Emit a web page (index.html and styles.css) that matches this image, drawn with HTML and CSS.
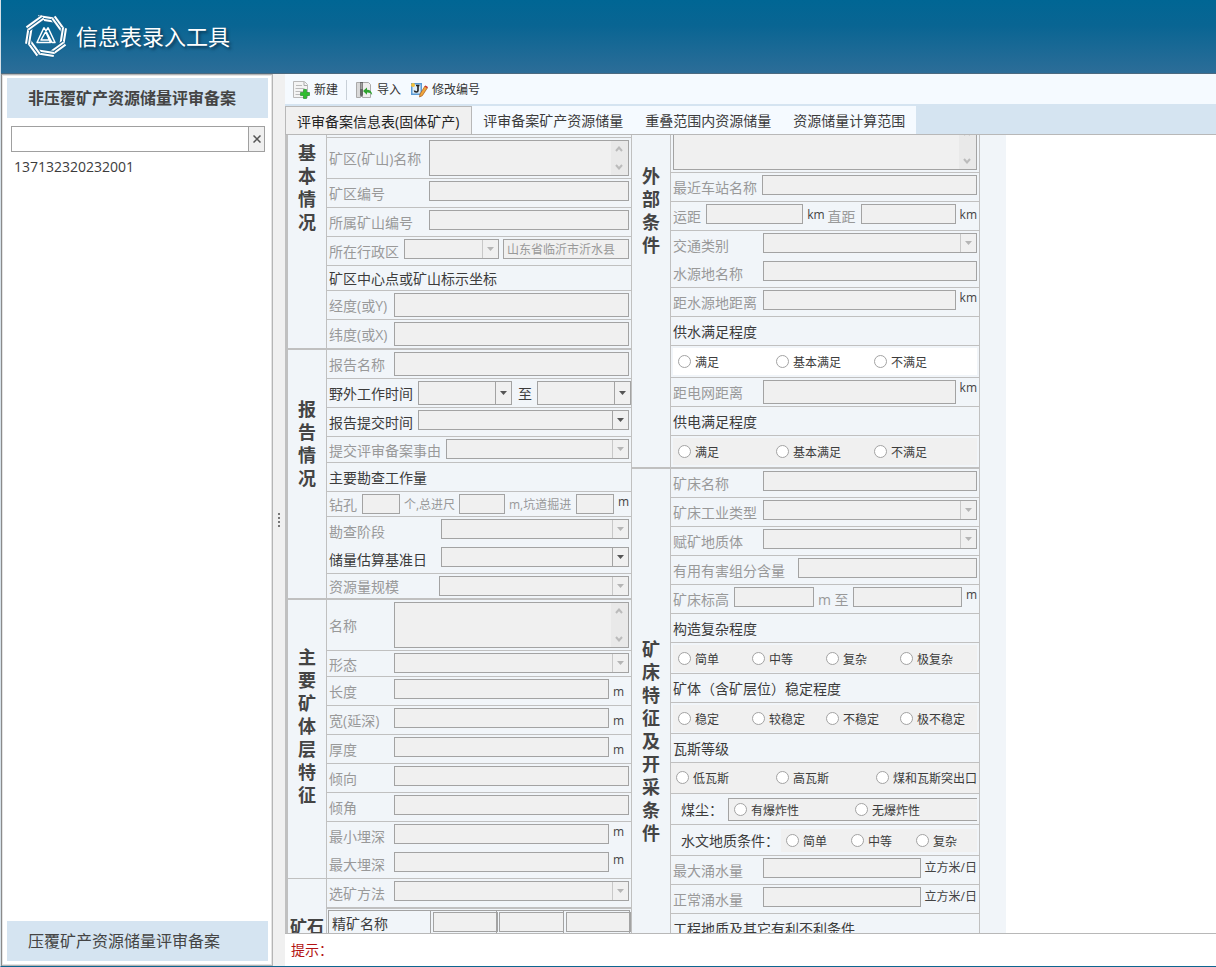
FILE: index.html
```html
<!DOCTYPE html>
<html lang="zh-CN">
<head>
<meta charset="utf-8">
<title>信息表录入工具</title>
<link rel="stylesheet" href="styles.css">
</head>
<body>
<div class="app">
  <header class="header">
    <svg class="logo" viewBox="-22 -22 44 44" aria-hidden="true">
      <defs>
        <g id="strip" fill="none">
          <path d="M-8 -18.500L10 -15.500" stroke="#17628c" stroke-width="7"/>
          <path d="M-8 -18.500L11 -15.500" stroke="#fff" stroke-width="5"/>
          <path d="M-8 -18.500L11 -15.500" stroke="#17628c" stroke-width="1"/>
        </g>
      </defs>
      <use href="#strip"/><use href="#strip" transform="rotate(45)"/><use href="#strip" transform="rotate(90)"/><use href="#strip" transform="rotate(135)"/>
      <use href="#strip" transform="rotate(180)"/><use href="#strip" transform="rotate(225)"/><use href="#strip" transform="rotate(270)"/><use href="#strip" transform="rotate(315)"/>
      <g fill="none" stroke="#fff" stroke-width="1.500" stroke-linejoin="round">
        <path d="M-2 -8.500L-9 6.500H4.500L0 -3.500M2 -8.500L9 6.500H6L-2 -8.500M2 -8.500L-5 4H3"/>
      </g>
    </svg>
    <h1 class="title">信息表录入工具</h1>
  </header>

  <div class="body">
    <aside class="sidebar">
      <button class="nav nav-active" type="button">非压覆矿产资源储量评审备案</button>
      <div class="search">
        <input class="search-input" type="text" aria-label="搜索">
        <button class="search-clear" type="button" aria-label="清除"><svg viewBox="0 0 8 8"><path d="M0.500 0.500 7.500 7.500M7.500 0.500 0.500 7.500" stroke="#555" stroke-width="1.500"/></svg></button>
      </div>
      <ul class="list"><li>137132320232001</li></ul>
      <button class="nav" type="button">压覆矿产资源储量评审备案</button>
    </aside>
    <div class="splitter"><i></i><i></i><i></i><i></i></div>

    <main class="main">
      <div class="toolbar">
        <button class="tool" type="button">
          <svg viewBox="0 0 18 18"><path d="M1.500 0.500h11l3 3v13h-14z" fill="#f4f4f4" stroke="#b9b9b9"/><path d="M12 1v3.500h3" fill="none" stroke="#aaa"/><path d="M4 4.500h6M3.500 7.500h9M3.500 10.500h8M3.500 13.500h5" stroke="#bbb"/><path d="M11.500 8.500h3v3h3v3h-3v3h-3v-3h-3v-3h3z" fill="#2fbe2f" stroke="#14871b" stroke-width=".6"/></svg>新建</button>
        <span class="tool-sep"></span>
        <button class="tool" type="button">
          <svg viewBox="0 0 18 18"><path d="M1.500 1.500h4v15h-4z" fill="#d9d9d9" stroke="#aaa"/><path d="M7.500 1.500h6l2 2v13h-8z" fill="#eee" stroke="#aaa"/><path d="M5 1h3v13l-1.500 2-1.500-2z" fill="#666"/><path d="M5.500 3h2M5.500 5h2M5.500 7h2" stroke="#ddd"/><path d="M8 10l4-3.500v2.300c3 0 5 1.700 5.200 5.200-1.200-2-2.800-2.700-5.200-2.600v2.300z" fill="#2fa32f"/></svg>导入</button>
        <button class="tool" type="button">
          <svg viewBox="0 0 18 18"><path d="M1 2h11v12H1z" fill="#5b9bd5"/><path d="M2.500 3.500h8v9h-8z" fill="#dcecf8"/><circle cx="3" cy="4" r="2" fill="#f3c13a"/><path d="M8 4v5.500c0 2-3.500 2-3.500 0M6 4.500h3.500" fill="none" stroke="#222" stroke-width="1.600"/><path d="M10 13l5-8 2.500 1.700-5.200 8L9.500 16z" fill="#f0a63c" stroke="#a65a1b" stroke-width=".7"/><path d="M15 5l2.500 1.700" stroke="#c33" stroke-width="1.500"/></svg>修改编号</button>
      </div>
      <div class="tabs" role="tablist">
        <button class="tab tab-active" role="tab" type="button">评审备案信息表(固体矿产)</button>
        <button class="tab" role="tab" type="button">评审备案矿产资源储量</button>
        <button class="tab" role="tab" type="button">重叠范围内资源储量</button>
        <button class="tab" role="tab" type="button">资源储量计算范围</button>
      </div>

      <div class="viewport">
        <form class="sheet">
          <div class="column">
            <section class="section">
              <h2 class="side side-1">基本情况</h2>
              <div class="rows rows-end">
                <div class="row row-cut"></div>
                <div class="row row-41"><label class="w100" for="f1">矿区(矿山)名称</label><textarea id="f1" disabled></textarea></div>
                <div class="row"><label class="w100" for="f2">矿区编号</label><input class="grow" id="f2" type="text" disabled></div>
                <div class="row"><label class="w100" for="f3">所属矿山编号</label><input class="grow" id="f3" type="text" disabled></div>
                <div class="row"><label class="w75" for="f4">所在行政区</label><select class="i95" id="f4" disabled></select><input class="grow gap-l" type="text" aria-label="行政区名称" value="山东省临沂市沂水县" disabled></div>
                <div class="row row-25"><span class="label dark">矿区中心点或矿山标示坐标</span></div>
                <div class="row"><label class="w65" for="f5">经度(或Y)</label><input class="grow tall" id="f5" type="text" disabled></div>
                <div class="row"><label class="w65" for="f6">纬度(或X)</label><input class="grow tall" id="f6" type="text" disabled></div>
              </div>
            </section>
            <section class="section">
              <h2 class="side side-2">报告情况</h2>
              <div class="rows rows-end">
                <div class="row"><label class="w65" for="g1">报告名称</label><input class="grow tall" id="g1" type="text" disabled></div>
                <div class="row row-flush"><label class="w89 dark" for="g2">野外工作时间</label><select class="grow tall" id="g2"></select><label class="between dark" for="g3">至</label><select class="grow tall" id="g3"></select></div>
                <div class="row"><label class="w89 dark" for="g4">报告提交时间</label><select class="grow" id="g4"></select></div>
                <div class="row row-26"><label class="w117" for="g5">提交评审备案事由</label><select class="grow" id="g5" disabled></select></div>
                <div class="row"><span class="label dark">主要勘查工作量</span></div>
                <div class="row row-25"><label class="w33" for="g6">钻孔</label><input class="i38" id="g6" type="text" disabled><label class="small w59" for="g7">个,总进尺</label><input class="i46" id="g7" type="text" disabled><label class="small grow" for="g8">m,坑道掘进</label><input class="i38" id="g8" type="text" disabled><span class="unit">m</span></div>
                <div class="row row-open"><label class="w112" for="g9">勘查阶段</label><select class="grow" id="g9" disabled></select></div>
                <div class="row"><label class="w112 dark" for="g10">储量估算基准日</label><select class="grow" id="g10"></select></div>
                <div class="row row-25"><label class="w110" for="g11">资源量规模</label><select class="grow" id="g11" disabled></select></div>
              </div>
            </section>
            <section class="section">
              <h2 class="side side-3">主要矿体层特征</h2>
              <div class="rows">
                <div class="row row-51"><label class="w65" for="h1">名称</label><textarea id="h1" disabled></textarea></div>
                <div class="row row-26"><label class="w65" for="h2">形态</label><select class="grow" id="h2" disabled></select></div>
                <div class="row"><label class="w65" for="h3">长度</label><input class="grow" id="h3" type="text" disabled><span class="unit unit-m low">m</span></div>
                <div class="row"><label class="w65" for="h4">宽(延深)</label><input class="grow" id="h4" type="text" disabled><span class="unit unit-m low">m</span></div>
                <div class="row"><label class="w65" for="h5">厚度</label><input class="grow" id="h5" type="text" disabled><span class="unit unit-m low">m</span></div>
                <div class="row"><label class="w65" for="h6">倾向</label><input class="grow" id="h6" type="text" disabled></div>
                <div class="row"><label class="w65" for="h7">倾角</label><input class="grow" id="h7" type="text" disabled></div>
                <div class="row row-open"><label class="w65" for="h8">最小埋深</label><input class="grow" id="h8" type="text" disabled><span class="unit unit-m">m</span></div>
                <div class="row"><label class="w65" for="h9">最大埋深</label><input class="grow" id="h9" type="text" disabled><span class="unit unit-m">m</span></div>
              </div>
            </section>
            <section class="section">
              <h2 class="side side-4">矿石</h2>
              <div class="rows">
                <div class="row row-thick"><label class="w65" for="k1">选矿方法</label><select class="grow" id="k1" disabled></select></div>
                <table class="ore">
                  <tr><th>精矿名称</th><td><input type="text" aria-label="精矿名称一" disabled></td><td><input type="text" aria-label="精矿名称二" disabled></td><td><input type="text" aria-label="精矿名称三" disabled></td></tr>
                </table>
              </div>
            </section>
          </div>

          <div class="column">
            <section class="section">
              <h2 class="side side-5">外部条件</h2>
              <div class="rows rows-end">
                <div class="row row-38"><textarea class="scrolled" aria-label="交通位置" disabled></textarea></div>
                <div class="row"><label class="w89" for="m1">最近车站名称</label><input class="grow" id="m1" type="text" disabled></div>
                <div class="row"><label class="w33" for="m2">运距</label><input class="grow" id="m2" type="text" disabled><span class="unit low">km</span><label class="near" for="m3">直距</label><input class="i95" id="m3" type="text" disabled><span class="unit low">km</span></div>
                <div class="row row-open"><label class="w90" for="m4">交通类别</label><select class="grow" id="m4" disabled></select></div>
                <div class="row"><label class="w90" for="m5">水源地名称</label><input class="grow" id="m5" type="text" disabled></div>
                <div class="row"><label class="w90" for="m6">距水源地距离</label><input class="grow" id="m6" type="text" disabled><span class="unit">km</span></div>
                <div class="row"><span class="label dark">供水满足程度</span></div>
                <div class="row row-32"><div class="radios radios-white r98">
                  <label><input type="radio" name="water">满足</label><label><input type="radio" name="water">基本满足</label><label><input type="radio" name="water">不满足</label></div></div>
                <div class="row"><label class="w90" for="m7">距电网距离</label><input class="grow tall" id="m7" type="text" disabled><span class="unit">km</span></div>
                <div class="row"><span class="label dark">供电满足程度</span></div>
                <div class="row row-32"><div class="radios r98">
                  <label><input type="radio" name="power">满足</label><label><input type="radio" name="power">基本满足</label><label><input type="radio" name="power">不满足</label></div></div>
              </div>
            </section>
            <section class="section">
              <h2 class="side side-6">矿床特征及开采条件</h2>
              <div class="rows">
                <div class="row"><label class="w90" for="n1">矿床名称</label><input class="grow" id="n1" type="text" disabled></div>
                <div class="row"><label class="w90" for="n2">矿床工业类型</label><select class="grow" id="n2" disabled></select></div>
                <div class="row"><label class="w90" for="n3">赋矿地质体</label><select class="grow" id="n3" disabled></select></div>
                <div class="row"><label class="w125" for="n4">有用有害组分含量</label><input class="grow" id="n4" type="text" disabled></div>
                <div class="row"><label class="w61" for="n5">矿床标高</label><input class="i80" id="n5" type="text" disabled><label class="w39" for="n6">m 至</label><input class="grow" id="n6" type="text" disabled><span class="unit">m</span></div>
                <div class="row"><span class="label dark">构造复杂程度</span></div>
                <div class="row row-31"><div class="radios r74">
                  <label><input type="radio" name="structure">简单</label><label><input type="radio" name="structure">中等</label><label><input type="radio" name="structure">复杂</label><label><input type="radio" name="structure">极复杂</label></div></div>
                <div class="row"><span class="label dark">矿体（含矿层位）稳定程度</span></div>
                <div class="row row-31"><div class="radios r74">
                  <label><input type="radio" name="stable">稳定</label><label><input type="radio" name="stable">较稳定</label><label><input type="radio" name="stable">不稳定</label><label><input type="radio" name="stable">极不稳定</label></div></div>
                <div class="row"><span class="label dark">瓦斯等级</span></div>
                <div class="row row-31 row-bare"><div class="radios r100">
                  <label><input type="radio" name="gas">低瓦斯</label><label><input type="radio" name="gas">高瓦斯</label><label><input type="radio" name="gas">煤和瓦斯突出口</label></div></div>
                <div class="row row-31 row-inset"><span class="label dark w47">煤尘：</span><div class="radios radios-boxed r121">
                  <label><input type="radio" name="dust">有爆炸性</label><label><input type="radio" name="dust">无爆炸性</label></div></div>
                <div class="row row-31 row-inset"><span class="label dark w100">水文地质条件：</span><div class="radios r65">
                  <label><input type="radio" name="hydro">简单</label><label><input type="radio" name="hydro">中等</label><label><input type="radio" name="hydro">复杂</label></div></div>
                <div class="row"><label class="w90" for="n7">最大涌水量</label><input class="grow" id="n7" type="text" disabled><span class="unit unit-cn">立方米/日</span></div>
                <div class="row"><label class="w90" for="n8">正常涌水量</label><input class="grow" id="n8" type="text" disabled><span class="unit unit-cn">立方米/日</span></div>
                <div class="row"><span class="label dark">工程地质及其它有利不利条件</span></div>
              </div>
            </section>
          </div>
        </form>
      </div>
      <footer class="hint">提示：</footer>
    </main>
  </div>
</div>
</body>
</html>
```
FILE: styles.css
```css
* { box-sizing: border-box; }

body {
  margin: 0;
  font-family: "Open Sans", "Noto Sans CJK SC", sans-serif;
  font-size: 14px;
  color: #3c3c3c;
  background: #fff;
}

button, input, select, textarea {
  font-family: inherit;
  margin: 0;
  border-radius: 0;
}

button { cursor: pointer; border: 0; }

.app {
  height: 100vh;
  display: flex;
  flex-direction: column;
  border-bottom: 1px solid #0e6590;
  border-left: 1px solid #d5e0e8;
  overflow: hidden;
}

/* Header */
.header {
  flex: none;
  height: 74px;
  padding: 0 0 2px 23px;
  display: flex;
  align-items: center;
  gap: 8px;
  background: linear-gradient(#006694, #096593 35%, #2c6d98);
  border-bottom: 1px solid #4c6a80;
}

.logo {
  width: 44px;
  height: 44px;
}

.title {
  margin: 0;
  font-size: 22px;
  line-height: 32px;
  font-weight: 400;
  color: #fff;
  text-shadow: 2px 2px 3px #0a3551;
}

.body {
  flex: 1;
  min-height: 0;
  display: flex;
}

/* Sidebar */
.sidebar {
  flex: none;
  width: 272px;
  padding: 3px 4px 4px;
  display: flex;
  flex-direction: column;
  border: 1px solid #b5b5b5;
  border-left: 2px solid #8a8a8a;
  outline: 1px solid #e4e4e4;
  outline-offset: -2px;
}

.nav {
  flex: none;
  height: 40px;
  padding: 0 21px 2px;
  text-align: left;
  font-size: 16px;
  color: #444;
  background: #d5e4f1;
}

.nav-active { font-weight: 700; }

.search {
  flex: none;
  height: 26px;
  margin: 8px 3px 0 4px;
  display: flex;
  border: 1px solid #a0a0a0;
}

.search-input {
  flex: 1;
  min-width: 0;
  border: 0;
  padding: 0 4px;
  outline: 0;
}

.search-clear {
  width: 16px;
  padding: 0;
  border-left: 1px solid #a0a0a0;
  background: #f0f0f0;
}

.search-clear svg { width: 8px; height: 8px; display: block; margin: auto; }

.list {
  flex: 1;
  margin: 0;
  padding: 4px 7px;
  list-style: none;
  line-height: 22px;
}

.splitter {
  flex: none;
  width: 12px;
  display: flex;
  flex-direction: column;
  justify-content: center;
  align-items: center;
  gap: 2px;
  background: #f0f0f0;
}

.splitter i { width: 2px; height: 2px; background: #777; }

/* Main area */
.main {
  flex: 1;
  min-width: 0;
  display: flex;
  flex-direction: column;
}

.toolbar {
  flex: none;
  height: 30px;
  padding: 2px 7px 0;
  display: flex;
  align-items: center;
  background: #f5faff;
}

.tool {
  display: flex;
  align-items: center;
  gap: 4px;
  padding: 0;
  margin-right: 9px;
  font-size: 12px;
  line-height: 18px;
  color: #333;
  background: none;
}

.tool svg { width: 18px; height: 18px; }

.tool-sep {
  width: 1px;
  height: 20px;
  margin: 0 8px 0 -1px;
  background: #c8d0d8;
}

.tabs {
  flex: none;
  height: 31px;
  padding-top: 2px;
  display: flex;
  background: #d5e4f1;
  border-bottom: 1px solid #b8b8b8;
}

.tab {
  padding: 0 11px;
  font-size: 14px;
  color: #3c3c3c;
  background: #f5faff;
}

.tab-active {
  padding-right: 12px;
  color: #222;
  background: #f0f0f0;
  border: 1px solid #b8b8b8;
  border-bottom: 0;
}

.viewport {
  flex: 1;
  min-height: 0;
  overflow: hidden;
  border-bottom: 1px solid #b8b8b8;
}

.hint {
  flex: none;
  height: 32px;
  padding: 0 6px;
  line-height: 32px;
  color: #b31212;
}

/* Form sheet */
.sheet {
  max-width: 721px;
  padding-right: 26px;
  display: flex;
  align-items: flex-start;
  background: #f1f5f9;
  border-left: 3px solid #c0c0c0;
}

.column {
  flex: 344 1 0;
  min-width: 0;
  border-right: 1px solid #c0c0c0;
}

.column + .column { flex-grow: 348; }

.section { display: flex; }

.side {
  flex: none;
  width: 38px;
  margin: 0;
  padding: 0 10px;
  font-family: "Liberation Serif", "Noto Sans CJK SC", serif;
  font-size: 18px;
  font-weight: 700;
  line-height: 23px;
  color: #444;
}

.side-1 { padding-top: 8px; }
.side-2 { padding-top: 49px; }
.side-3 { padding-top: 47px; }
.side-4 { padding: 37px 0 0 2px; font-size: 17px; white-space: nowrap; }
.side-5 { padding-top: 31px; }
.side-6 { padding-top: 170px; }

.section:has(.rows-end) { border-bottom: 2px solid #c0c0c0; }
.section:has(.side-3) { border-bottom: 1px solid #c0c0c0; }

.rows {
  flex: 1;
  min-width: 0;
  border-left: 1px solid #c0c0c0;
}

.row {
  height: 29px;
  padding: 2px 2px 0;
  display: flex;
  align-items: flex-start;
  border-bottom: 1px solid #c0c0c0;
}

.section .rows .row:last-child { border-bottom: 0; height: 28px; }
.section .rows .row-25:last-child { height: 24px; }
.section .rows .row-32:last-child { height: 31px; }

.row-cut { height: 3px; }
.row-25 { height: 25px; }
.row-26 { height: 26px; }
.row-31 { height: 31px; }
.row-32 { height: 32px; }
.row-38 { height: 38px; }
.row-41 { height: 41px; }
.row-51 { height: 51px; }
.row-open { height: 28px; border-bottom: 0; }
.row-thick { height: 30px; border-bottom-width: 2px; }
.row-flush { padding-right: 0; }
.row-bare { padding: 0; }
.row-inset { padding-left: 10px; }

.row > label, .label {
  flex: none;
  align-self: center;
  line-height: 20px;
  white-space: nowrap;
  color: #999;
}

.row > .dark { color: #3c3c3c; }
.row > .small { font-size: 12px; padding-left: 4px; }
.row > .between { padding: 0 5px 0 6px; }
.row > .near { padding: 0 5px 0 3px; }

.w33 { width: 33px; }
.w39 { width: 39px; padding-left: 4px; }
.w47 { width: 47px; }
.w59 { width: 59px; }
.w61 { width: 61px; }
.w65 { width: 65px; }
.w75 { width: 75px; }
.w89 { width: 89px; }
.w90 { width: 90px; }
.w100 { width: 100px; }
.w110 { width: 110px; }
.w112 { width: 112px; }
.w117 { width: 117px; }
.w125 { width: 125px; }

.row > input, .row > select, .row > textarea, .ore input {
  min-width: 0;
  height: 20px;
  padding: 0 3px;
  font-size: 12px;
  color: #999;
  background-color: #f0f0f0;
  border: 1px solid #a3a3a3;
}

.row > .tall { height: 24px; }
.row > .grow { flex: 1; }
.row > .gap-l { margin-left: 4px; }
.row > .i38 { width: 38px; }
.row > .i46 { width: 46px; }
.row > .i80 { width: 80px; }
.row > .i95 { width: 95px; }

.row > select {
  appearance: none;
  opacity: 1;
  background-image:
    url('data:image/svg+xml,<svg xmlns="http://www.w3.org/2000/svg" width="7" height="4"><path d="M0 0h7L3.500 4z" fill="%23555"/></svg>'),
    linear-gradient(#a3a3a3, #a3a3a3);
  background-size: 7px 4px, 1px 100%;
  background-position: right 4px center, right 15px top;
  background-repeat: no-repeat;
}

.row > select:disabled {
  background-image:
    url('data:image/svg+xml,<svg xmlns="http://www.w3.org/2000/svg" width="7" height="4"><path d="M0 0h7L3.500 4z" fill="%23b5b5b5"/></svg>'),
    linear-gradient(#c8c8c8, #c8c8c8);
}

.row > textarea {
  flex: 1;
  height: 36px;
  resize: none;
  overflow: hidden;
  background-image:
    url('data:image/svg+xml,<svg xmlns="http://www.w3.org/2000/svg" width="8" height="6"><path d="M1 5l3-3.500L7 5" fill="none" stroke="%23bbb" stroke-width="2"/></svg>'),
    url('data:image/svg+xml,<svg xmlns="http://www.w3.org/2000/svg" width="8" height="6"><path d="M1 1l3 3.500L7 1" fill="none" stroke="%23bbb" stroke-width="2"/></svg>'),
    linear-gradient(#e9e9e9, #e9e9e9);
  background-size: 8px 6px, 8px 6px, 17px 100%;
  background-position: right 5px top 5px, right 5px bottom 5px, right top;
  background-repeat: no-repeat;
}

.row-51 > textarea { height: 46px; }
.row > .scrolled { height: 46px; margin-top: -13px; }

.unit {
  flex: none;
  padding-left: 4px;
  font-size: 12px;
  line-height: 16px;
  color: #444;
}

.unit-m { width: 20px; }
.unit-cn { padding-top: 2px; }
.low { padding-top: 3px; }
.unit-m.low { padding-top: 5px; }

/* Radio groups */
.radios {
  flex: 1;
  min-width: 0;
  height: 27px;
  padding: 2px 0 0 5px;
  display: grid;
  align-items: center;
  background: #f0f0f0;
}

.radios-white { background: #fff; }
.r98 { grid-template-columns: repeat(3, 98px); }
.r74 { grid-template-columns: repeat(4, 74px); }
.r100 { grid-template-columns: repeat(3, 100px); }
.r121 { grid-template-columns: repeat(2, 121px); }
.r65 { grid-template-columns: repeat(3, 65px); }
.row-bare .radios { height: 30px; }

.row-inset .radios { height: 23px; margin-top: 2px; }

.radios-boxed {
  border: 1px solid #a3a3a3;
  border-right: 0;
}

.radios label {
  display: flex;
  align-items: center;
  gap: 4px;
  font-size: 12px;
  line-height: 16px;
  white-space: nowrap;
}

.radios input {
  appearance: none;
  flex: none;
  width: 13px;
  height: 13px;
  margin-bottom: 3px;
  border: 1px solid #a3a3a3;
  border-radius: 50%;
  background: #fff;
}

.radios input:checked { box-shadow: inset 0 0 0 3px #fff; background: #444; }

/* Ore concentrate table */
.ore {
  width: 302px;
  margin: 1px 0 0 1px;
  table-layout: fixed;
  border-collapse: collapse;
  border: 1px solid #a3a3a3;
}

.ore th, .ore td {
  height: 25px;
  padding: 0 0 0 3px;
  border: 1px solid #a3a3a3;
  font-weight: 400;
  text-align: left;
}

.ore th { width: 102px; }
.ore td { padding: 1px 0 0 2px; vertical-align: top; }
.ore td input { display: block; width: 65px; }
```
